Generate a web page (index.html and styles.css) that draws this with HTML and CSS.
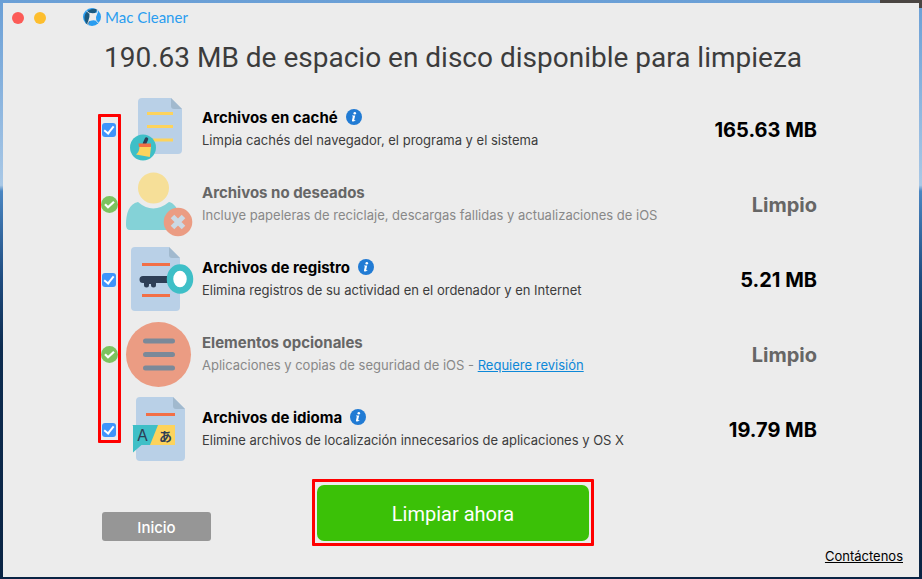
FILE: index.html
```html
<!DOCTYPE html>
<html lang="es">
<head>
<meta charset="utf-8">
<meta name="viewport" content="width=device-width, initial-scale=1">
<title>Mac Cleaner</title>
<link rel="stylesheet" href="styles.css">
</head>
<body>
<main class="window">
  <header class="titlebar">
    <div class="lights">
      <button class="light light-close" type="button" aria-label="Cerrar"></button>
      <button class="light light-min" type="button" aria-label="Minimizar"></button>
    </div>
    <div class="brand">
      <svg class="brand-logo" viewBox="0 0 18 18" aria-hidden="true">
        <circle cx="9" cy="9" r="9" fill="#2a9df0"/>
        <path fill="#1b5a80" d="M5 17A9 9 0 0 1 14.500 1.800L9 9z"/>
        <path fill="#ececec" d="M6.500 4.800Q10.500 5.800 14.800 4.200Q12.300 8.500 13.300 12.800Q9 11.500 5 14Q7 9.500 6.500 4.800z"/>
        <path fill="none" stroke="#ececec" stroke-width=".9" d="M6.800 5.500Q4.500 4.500 3.300 2.500M14.300 4.800Q14.800 3 14 1.500M12.800 12.500Q14.500 13.500 15.500 15.500M5.500 13.500Q4.500 15 5 17"/>
      </svg>
      <span>Mac Cleaner</span>
    </div>
  </header>

  <h1 class="headline">190.63 MB de espacio en disco disponible para limpieza</h1>

  <ul class="items">
    <li class="item">
      <input class="check" type="checkbox" id="cache" checked>
      <svg class="art" viewBox="0 0 68 68" aria-hidden="true">
        <path fill="#b9d0e7" d="M22 5h28l11 11v41a4 4 0 0 1-4 4H21a4 4 0 0 1-4-4V9a4 4 0 0 1 4-4z"/>
        <path fill="#a1b9ce" d="M50 5v8a3 3 0 0 0 3 3h8z"/>
        <path stroke="#fdd35c" stroke-width="3" d="M26 20.500h26M26 33.500h26M32 47h20"/>
        <circle cx="22" cy="54.500" r="13" fill="#3ebfc7"/>
        <path stroke="#2d3e56" stroke-width="3.500" stroke-linecap="round" d="M23.500 50.500l2-4.500"/>
        <path fill="#f26f46" d="M17.500 50.500h12.500v3.500H18z"/>
        <path fill="#fdd35c" d="M18.500 54h11.500l-1.200 10-13.800-2.500q3.500-3 3.500-7.500z"/>
      </svg>
      <div class="info">
        <div class="name"><label for="cache">Archivos en caché</label>
          <svg class="tip" viewBox="0 0 16 16" role="img" aria-label="Información"><circle cx="8" cy="8" r="8" fill="#217bd4"/><circle cx="8.800" cy="4.200" r="1.300" fill="#fff"/><path fill="#fff" d="M6.200 6.500h3l-1.100 4.800 1.300-.2-.2.700c-1.800 1.100-3.500.9-3.200-.5l.9-4-1-.1z"/></svg>
        </div>
        <p class="note">Limpia cachés del navegador, el programa y el sistema</p>
      </div>
      <strong class="size">165.63 MB</strong>
    </li>
    <li class="item item-clean">
      <svg class="done" viewBox="0 0 17 17" aria-hidden="true"><circle cx="8.500" cy="8.500" r="8.500" fill="#7dc35f"/><path fill="none" stroke="#fff" stroke-width="2.200" d="M4 8.300l3 3 6-5.600"/></svg>
      <svg class="art" viewBox="0 0 68 68" aria-hidden="true">
        <circle cx="32.500" cy="20" r="15.500" fill="#f6df98"/>
        <path fill="#84d2d7" d="M17 34q15 13 31 0c5 1 9 7 10 12l-12 16H9q-4 0-4-5c0-12 3-21 12-23z"/>
        <circle cx="57" cy="54" r="14.300" fill="#eb9c83"/>
        <path stroke="#cbd9e5" stroke-width="5" d="M51.500 48.500l11 11m0-11l-11 11"/>
      </svg>
      <div class="info">
        <div class="name">Archivos no deseados</div>
        <p class="note">Incluye papeleras de reciclaje, descargas fallidas y actualizaciones de iOS</p>
      </div>
      <strong class="size">Limpio</strong>
    </li>
    <li class="item">
      <input class="check" type="checkbox" id="logs" checked>
      <svg class="art" viewBox="0 0 68 68" aria-hidden="true">
        <path fill="#b9d0e7" d="M14 4h34l11 11v49a4 4 0 0 1-4 4H14a4 4 0 0 1-4-4V8a4 4 0 0 1 4-4z"/>
        <path fill="#a1b9ce" d="M48 4v8a3 3 0 0 0 3 3h8z"/>
        <path stroke="#f26f46" stroke-width="3" d="M21 21.500h28M21 52.500h28"/>
        <path fill="#2d3e56" d="M22 33h26v7H35v2a2.500 2.500 0 0 1-5 0v-1h-2v1a2.500 2.500 0 0 1-5 0v-2h-1a3.500 3.500 0 0 1 0-7z"/>
        <ellipse cx="59" cy="36" rx="10" ry="11.500" fill="#fff" stroke="#3ebfc7" stroke-width="6.500"/>
      </svg>
      <div class="info">
        <div class="name"><label for="logs">Archivos de registro</label>
          <svg class="tip" viewBox="0 0 16 16" role="img" aria-label="Información"><circle cx="8" cy="8" r="8" fill="#217bd4"/><circle cx="8.800" cy="4.200" r="1.300" fill="#fff"/><path fill="#fff" d="M6.200 6.500h3l-1.100 4.800 1.300-.2-.2.700c-1.800 1.100-3.500.9-3.200-.5l.9-4-1-.1z"/></svg>
        </div>
        <p class="note">Elimina registros de su actividad en el ordenador y en Internet</p>
      </div>
      <strong class="size">5.21 MB</strong>
    </li>
    <li class="item item-clean">
      <svg class="done" viewBox="0 0 17 17" aria-hidden="true"><circle cx="8.500" cy="8.500" r="8.500" fill="#7dc35f"/><path fill="none" stroke="#fff" stroke-width="2.200" d="M4 8.300l3 3 6-5.600"/></svg>
      <svg class="art" viewBox="0 0 68 68" aria-hidden="true">
        <circle cx="37.500" cy="36.500" r="32.500" fill="#eb9c83"/>
        <path stroke="#7b8999" stroke-width="5" stroke-linecap="round" d="M24.500 23h27M24.500 36.500h27M24.500 50h27"/>
      </svg>
      <div class="info">
        <div class="name">Elementos opcionales</div>
        <p class="note">Aplicaciones y copias de seguridad de iOS - <a class="review" href="#">Requiere revisión</a></p>
      </div>
      <strong class="size">Limpio</strong>
    </li>
    <li class="item">
      <input class="check" type="checkbox" id="lang" checked>
      <svg class="art" viewBox="0 0 68 68" aria-hidden="true">
        <path fill="#b9d0e7" d="M19 4h33l12 12v48a4 4 0 0 1-4 4H19a4 4 0 0 1-4-4V8a4 4 0 0 1 4-4z"/>
        <path fill="#a1b9ce" d="M52 4v9a3 3 0 0 0 3 3h9z"/>
        <path stroke="#f26f46" stroke-width="3" d="M25 21.500h29"/>
        <path fill="#3ebfc7" d="M11.500 32H38l-8 20h-9.500l-8.500 7.500V33z"/>
        <path fill="#fdd35c" d="M37 32h17v20H29z"/>
        <text class="glyph-latin" x="16" y="48">A</text>
        <text class="glyph-kana" x="38" y="48">あ</text>
      </svg>
      <div class="info">
        <div class="name"><label for="lang">Archivos de idioma</label>
          <svg class="tip" viewBox="0 0 16 16" role="img" aria-label="Información"><circle cx="8" cy="8" r="8" fill="#217bd4"/><circle cx="8.800" cy="4.200" r="1.300" fill="#fff"/><path fill="#fff" d="M6.200 6.500h3l-1.100 4.800 1.300-.2-.2.700c-1.800 1.100-3.500.9-3.200-.5l.9-4-1-.1z"/></svg>
        </div>
        <p class="note">Elimine archivos de localización innecesarios de aplicaciones y OS X</p>
      </div>
      <strong class="size">19.79 MB</strong>
    </li>
  </ul>

  <footer class="actions">
    <button class="home" type="button">Inicio</button>
    <div class="highlight"><button class="clean" type="button">Limpiar ahora</button></div>
    <a class="contact" href="#">Contáctenos</a>
  </footer>
</main>
</body>
</html>
```
FILE: styles.css
```css
*,
*::before,
*::after {
  box-sizing: border-box;
}

body {
  margin: 0;
  min-height: 100vh;
  padding: 3px 3px 2px;
  display: flex;
  background:
    linear-gradient(#4a4542, #4a4542) top right / 42px 8px no-repeat,
    linear-gradient(#6a9fd6, #a9c8e6 32%, #4a86c2 33%, #1f4c80 48%, #0d2c50 60%, #0a2444);
  font-family: Inter, "Liberation Sans", sans-serif;
  color: #000;
}

.window {
  flex: 1;
  display: flex;
  flex-direction: column;
  padding-right: 16px;
  background: #ececec;
}

.titlebar {
  display: flex;
  align-items: center;
  height: 30px;
  padding-left: 9px;
}

.lights {
  display: flex;
  gap: 10px;
}

.light {
  width: 12px;
  height: 12px;
  padding: 0;
  border: 0;
  border-radius: 50%;
}

.light-close {
  background: #fc5b57;
}

.light-min {
  background: #fdbe2e;
}

.brand {
  display: flex;
  align-items: center;
  gap: 4px;
  margin: 0 0 2px 37px;
  font: 15px/20px Lato, sans-serif;
  color: #2a9df0;
}

.brand-logo {
  width: 18px;
  height: 18px;
}

.headline {
  margin: 7px 0 16px;
  text-align: center;
  font-family: Roboto, "Liberation Sans", sans-serif;
  font-size: 28px;
  line-height: 36px;
  font-weight: 400;
  color: #3c3c3c;
}

.items {
  position: relative;
  margin: 0 86px 0 98px;
  padding: 0;
  list-style: none;
}

.items::after {
  content: "";
  position: absolute;
  inset: 22px auto 24px -3px;
  width: 23px;
  border: 3px solid #f00;
  border-radius: 1px;
  pointer-events: none;
}

.item {
  display: grid;
  grid-template-columns: 16px 68px 1fr auto;
  align-items: center;
  height: 75px;
}

.check {
  appearance: none;
  display: grid;
  place-items: center;
  justify-self: center;
  width: 14px;
  height: 14px;
  margin: 0;
  border-radius: 3px;
  background: #3e94fb;
}

.check::after {
  content: "";
  width: 6px;
  height: 10px;
  margin-bottom: 2px;
  border: solid #fff;
  border-width: 0 2px 2px 0;
  transform: rotate(38deg);
}

.done {
  justify-self: center;
  width: 17px;
  height: 17px;
}

.art {
  width: 68px;
  height: 68px;
  margin: 0 0 6px 4px;
  overflow: visible;
}

.glyph-latin,
.glyph-kana {
  fill: #2d3e56;
  font: 400 16px Inter, sans-serif;
}

.glyph-kana {
  font: 700 13px "Noto Sans CJK JP", sans-serif;
}

.info {
  margin: 0 0 2px 17px;
}

.name {
  display: flex;
  align-items: center;
  gap: 8px;
  height: 20px;
  font-size: 15px;
  font-weight: 700;
}

.tip {
  width: 16px;
  height: 16px;
}

.note {
  margin: 3px 0 0;
  font-size: 13px;
  line-height: 20px;
  color: #3c3c3c;
}

.size {
  font-size: 20px;
  line-height: 24px;
  font-weight: 700;
}

.item-clean .name,
.item-clean .size {
  color: #666;
}

.item-clean .note {
  color: #888;
}

.review,
.item-clean .review {
  color: #0d88d8;
}

.actions {
  display: grid;
  grid-template-columns: 1fr 282px 1fr;
  align-items: start;
  margin-top: 12px;
}

.home {
  width: 109px;
  height: 29px;
  margin: 33px 0 0 99px;
  padding: 2px 0 0;
  border: 0;
  border-radius: 3px;
  background: #969696;
  font: 500 15px Inter, sans-serif;
  color: #fff;
}

.highlight {
  padding: 3px 2px 2px;
  border: 3px solid #f00;
  border-radius: 1px;
}

.clean {
  display: block;
  width: 100%;
  height: 56px;
  padding: 2px 0 0;
  border: 0;
  border-radius: 7px;
  background: #3bc107;
  font: 400 20px Roboto, sans-serif;
  color: #fff;
}

.contact {
  justify-self: end;
  margin-top: 68px;
  font-size: 13px;
  line-height: 18px;
  color: #000;
}
```
